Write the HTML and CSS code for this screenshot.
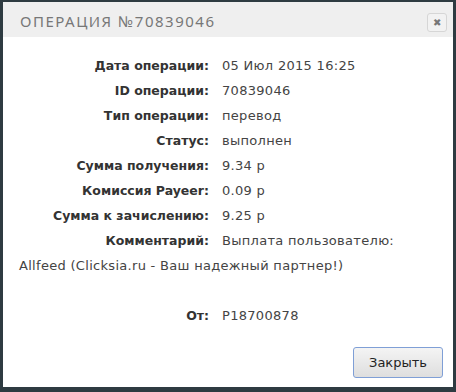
FILE: index.html
```html
<!DOCTYPE html>
<html lang="ru">
<head>
  <meta charset="UTF-8" />
  <title>Операция №70839046</title>
  <link rel="stylesheet" href="styles.css">
</head>
<body>
  <div class="dialog">
    <div class="dialog-header">
      <span class="dialog-title">Операция №70839046</span>
      <button class="close-x" title="Закрыть">&#10006;</button>
    </div>

    <div class="dialog-body">
      <div class="row"><span class="label">Дата операции:</span>05 Июл 2015 16:25</div>
      <div class="row"><span class="label">ID операции:</span>70839046</div>
      <div class="row"><span class="label">Тип операции:</span>перевод</div>
      <div class="row"><span class="label">Статус:</span>выполнен</div>
      <div class="row"><span class="label">Сумма получения:</span>9.34 р</div>
      <div class="row"><span class="label">Комиссия Payeer:</span>0.09 р</div>
      <div class="row"><span class="label">Сумма к зачислению:</span>9.25 р</div>
      <div class="row"><span class="label">Комментарий:</span><span>Выплата пользователю:</span></div>
      <div class="row">Allfeed (Clicksia.ru - Ваш надежный партнер!)</div>
      <div class="row row-from"><span class="label">От:</span>P18700878</div>
    </div>

    <div class="dialog-footer">
      <button class="btn-close">Закрыть</button>
    </div>
  </div>
</body>
</html>
```

FILE: styles.css
```css
body {
  margin: 0;
  background: #2e3b41;
  font-family: 'DejaVu Sans', sans-serif;
}

.dialog {
  margin: 2px 3px 0 3px;
  height: 385px;
  background: #fff;
  display: flex;
  flex-direction: column;
}

.dialog-header {
  height: 35px;
  background: #efefef;
  display: flex;
  align-items: center;
  justify-content: space-between;
  padding: 0 6px 0 17px;
}

.dialog-title {
  text-transform: uppercase;
  color: #777;
  font-family: 'Noto Sans', sans-serif;
  font-size: 15px;
  letter-spacing: 1.5px;
  padding-top: 2px;
}

.close-x {
  width: 20px;
  height: 19px;
  padding: 0;
  border: 1px solid #d6d6d6;
  border-radius: 3px;
  background: #f2f2f2;
  color: #777;
  font-size: 10px;
  line-height: 17px;
  margin-top: 6px;
}

.dialog-body {
  flex: 1;
  padding: 16px 20px 0 16px;
  font-size: 13px;
  letter-spacing: 0.3px;
  color: #444;
}

.row {
  line-height: 25px;
}

.label {
  display: inline-block;
  width: 190px;
  margin-right: 13px;
  text-align: right;
  font-weight: bold;
  font-size: 12.5px;
  letter-spacing: 0;
  color: #333;
}

.row-from {
  margin-top: 25px;
}

.dialog-footer {
  display: flex;
  justify-content: flex-end;
  padding: 0 10px 9px 0;
}

.btn-close {
  width: 90px;
  height: 31px;
  border: 1px solid #7f9fd6;
  border-radius: 3px;
  background: linear-gradient(#f4f4f4, #dedede);
  font-family: 'DejaVu Sans', sans-serif;
  font-size: 13px;
  color: #222;
}
```
